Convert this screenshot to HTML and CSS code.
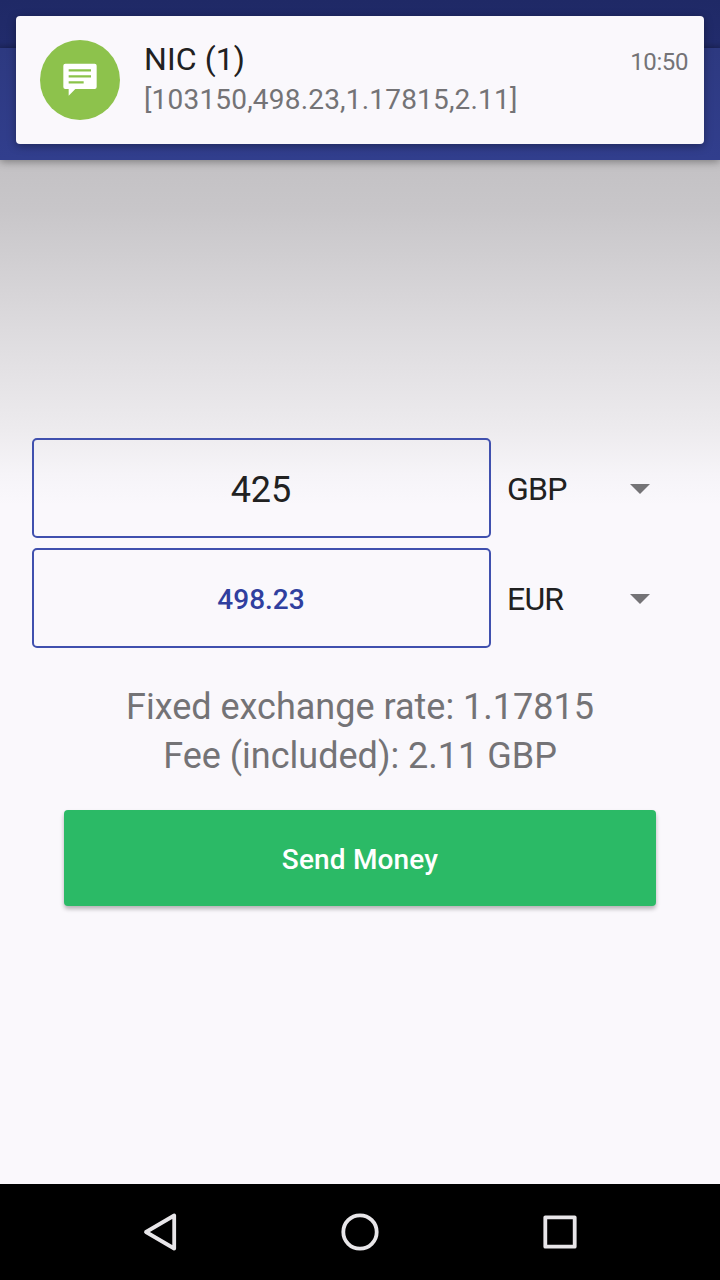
FILE: index.html
```html
<!DOCTYPE html>
<html lang="en">
<head>
    <meta charset="UTF-8">
    <meta name="viewport" content="width=device-width, initial-scale=1.0">
    <title>Send Money</title>
    <link rel="stylesheet" href="styles.css">
</head>
<body>
  <div class="status-bar"></div>
  <header class="app-bar"></header>

  <section class="notification">
    <div class="avatar">
      <svg width="40" height="40" viewBox="0 0 24 24">
        <path fill="#fff" d="M3.200 2.200h17.600q1.200 0 1.200 1.200v12.800q0 1.200-1.200 1.200H9.200L5.200 21.500v-4.100H3.200Q2 17.400 2 16.200V3.400Q2 2.200 3.200 2.200z"/>
        <path fill="none" stroke="#8bc34a" stroke-width="1.300" d="M5.200 6.200h13.400M5.200 9.800h13.400M5.200 13.400h9"/>
      </svg>
    </div>
    <div class="message">
      <div class="title-row">
        <h1>NIC (1)</h1>
        <time>10:50</time>
      </div>
      <p>[103150,498.23,1.17815,2.11]</p>
    </div>
  </section>

  <main>
    <form class="exchange">
      <div class="row">
        <input class="amount" name="amount" type="text" value="425">
        <button type="button" class="currency">GBP <span class="arrow"></span></button>
      </div>
      <div class="row">
        <output class="amount result">498.23</output>
        <button type="button" class="currency">EUR <span class="arrow"></span></button>
      </div>
      <div class="details">
        <p>Fixed exchange rate: 1.17815</p>
        <p>Fee (included): 2.11 GBP</p>
      </div>
      <button type="button" class="send">Send Money</button>
    </form>
  </main>

  <nav class="nav-bar">
    <svg width="48" height="48" viewBox="0 0 48 48"><path d="M38.200 7.500v33L10 24z"/></svg>
    <svg width="48" height="48" viewBox="0 0 48 48"><circle cx="24" cy="24" r="16.700"/></svg>
    <svg width="48" height="48" viewBox="0 0 48 48"><path d="M9.300 9.300h29.400v29.400H9.300z"/></svg>
  </nav>
</body>
</html>
```

FILE: styles.css
```css
* {
    box-sizing: border-box;
}
body {
    margin: 0;
    height: 1280px;
    display: flex;
    flex-direction: column;
    overflow: hidden;
    background-color: #faf8fc;
    font-family: Roboto, sans-serif;
    color: #212121;
}
h1, p {
    margin: 0;
    font-weight: 400;
}
.status-bar {
    height: 48px;
    background: linear-gradient(#1f2966, #212b6b 42px, #1d2660);
}
.app-bar {
    height: 112px;
    background: linear-gradient(#2d3980, #313e8d);
    box-shadow: 0 2px 8px rgba(0, 0, 0, 0.35);
    z-index: 1;
}
/* heads-up notification over the toolbar */
.notification {
    position: absolute;
    top: 16px;
    left: 16px;
    width: 688px;
    height: 128px;
    z-index: 2;
    display: flex;
    padding: 24px 16px 0 24px;
    background-color: #faf8fc;
    border-radius: 4px;
    box-shadow: 0 2px 8px rgba(0, 0, 0, 0.35);
}
.avatar {
    width: 80px;
    height: 80px;
    border-radius: 50%;
    background-color: #8dc24c;
    display: flex;
    justify-content: center;
    align-items: center;
}
.message {
    flex: 1;
    margin-left: 24px;
}
.title-row {
    display: flex;
    justify-content: space-between;
    align-items: baseline;
    height: 38px;
}
.title-row h1 {
    font-size: 32px;
    line-height: 38px;
    letter-spacing: 0.1px;
}
.title-row time {
    font-size: 24px;
    letter-spacing: -0.4px;
    color: #747376;
}
.message p {
    font-size: 28px;
    line-height: 33px;
    margin-top: 5px;
    letter-spacing: 0.19px;
    color: #747376;
}
main {
    flex: 1;
    padding: 278px 32px 0;
    background: linear-gradient(#c3c1c4, #c8c6c9 50px, #dddbde 170px, #edebee 270px, #f6f4f8 315px, #faf8fc 345px);
}
.row {
    display: flex;
    margin-bottom: 10px;
}
.amount {
    width: 459px;
    height: 100px;
    padding: 4px 1px 0 0;
    border: 2px solid #4050ae;
    border-radius: 5px;
    background: transparent;
    font-family: inherit;
    font-size: 36px;
    color: #212121;
    text-align: center;
}
.result {
    padding: 0 1px 0 0;
    font-size: 28px;
    font-weight: 500;
    line-height: 99px;
    color: #303f9f;
}
.currency {
    flex: 1;
    display: flex;
    align-items: center;
    justify-content: space-between;
    padding: 2px 38px 0 16px;
    border: none;
    background: transparent;
    font-family: inherit;
    font-size: 32px;
    letter-spacing: -0.8px;
    color: #212121;
}
.arrow {
    border: 10px solid transparent;
    border-top-color: #747376;
    border-bottom: none;
}
.details {
    margin-top: 35px;
    text-align: center;
    font-size: 36px;
    line-height: 49px;
    color: #747376;
}
.send {
    display: block;
    width: 592px;
    height: 96px;
    margin: 29px auto 0;
    padding: 2px 0 0;
    border: none;
    border-radius: 4px;
    background-color: #2bba66;
    box-shadow: 0 3px 4px rgba(0, 0, 0, 0.28);
    font-family: inherit;
    font-size: 28px;
    font-weight: 500;
    letter-spacing: 0.15px;
    color: #fff;
}
.nav-bar {
    height: 96px;
    display: flex;
    justify-content: center;
    align-items: center;
    gap: 152px;
    background-color: #000;
}
.nav-bar svg {
    fill: none;
    stroke: #e8e6e9;
    stroke-width: 3.8;
    stroke-linejoin: round;
}
```
